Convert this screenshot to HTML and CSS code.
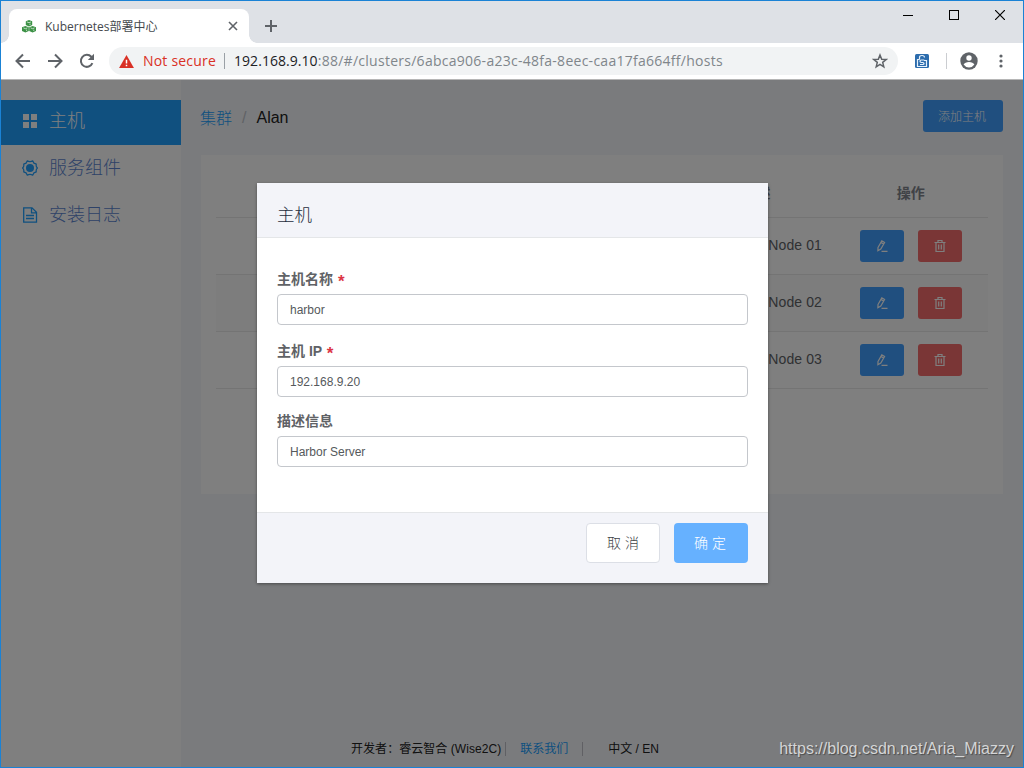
FILE: index.html
```html
<!DOCTYPE html>
<html lang="zh-CN">
<head>
    <meta charset="UTF-8">
    <meta name="viewport" content="width=device-width, initial-scale=1.0">
    <title>Kubernetes部署中心</title>
    <link rel="stylesheet" href="styles.css">
</head>
<body>
<div class="window">

    <!-- Tab strip -->
    <div class="tabstrip">
        <div class="tab">
            <svg class="favicon" viewBox="0 0 14 13">
                <g fill="#3c9146">
                    <path d="M7 0l3.200 1.300v3.800L7 6.500 3.800 5.100V1.300z"/>
                    <path d="M3.400 6l3.400 1.300v3.800L3.400 12.500 0 11.100V7.300z"/>
                    <path d="M10.600 6L14 7.300v3.800l-3.400 1.400-3.400-1.400V7.300z"/>
                </g>
                <path d="M4.800 1.900L7 2.700l2-.8M8 5V3.600M1.400 7.900l2 .8 2-.8M4.600 11V9.600M8.600 7.900l2 .8 2-.8M11.800 11V9.600" fill="none" stroke="#d9ecdb" stroke-width=".8"/>
            </svg>
            <span class="tab-title">Kubernetes部署中心</span>
            <svg class="tab-close" viewBox="0 0 10 10"><path d="M1 1l8 8M9 1L1 9" stroke="#5f6368" stroke-width="1.600"/></svg>
        </div>
        <svg class="new-tab" viewBox="0 0 12 12"><path d="M6 0v12M0 6h12" stroke="#5f6368" stroke-width="2"/></svg>
        <div class="window-controls">
            <svg viewBox="0 0 10 10" shape-rendering="crispEdges"><path d="M0 5.500h10" stroke="#000"/></svg>
            <svg viewBox="0 0 10 10" shape-rendering="crispEdges"><path d="M.5.5h9v9h-9z" fill="none" stroke="#000"/></svg>
            <svg viewBox="0 0 10 10"><path d="M0 0l10 10M10 0L0 10" stroke="#000" stroke-width="1.200"/></svg>
        </div>
    </div>

    <!-- Toolbar -->
    <div class="toolbar">
        <svg class="nav-icon" viewBox="0 0 16 16"><path d="M15 8H2M8 1.500L1.500 8 8 14.500" fill="none" stroke="#5f6368" stroke-width="2"/></svg>
        <svg class="nav-icon" viewBox="0 0 16 16"><path d="M1 8h13M8 1.500L14.500 8 8 14.500" fill="none" stroke="#5f6368" stroke-width="2"/></svg>
        <svg class="nav-icon" viewBox="0 0 16 16"><path d="M13.400 10.200A6 6 0 1 1 12.300 3.800L14 5.500" fill="none" stroke="#5f6368" stroke-width="2"/><path d="M15 .8v6.200H8.800z" fill="#5f6368"/></svg>
        <div class="address">
            <svg class="warning" viewBox="0 0 16 14"><path d="M8 0l8 14H0z" fill="#d93025"/><path d="M8 5v4.200M8 10.400v1.800" stroke="#fff" stroke-width="1.600"/></svg>
            <span class="not-secure">Not secure</span>
            <span class="separator"></span>
            <span class="url"><b>192.168.9.10</b>:88/#/clusters/6abca906-a23c-48fa-8eec-caa17fa664ff/hosts</span>
            <svg class="star" viewBox="0 0 16 16"><path d="M8 2l1.700 4.200 4.500.3-3.500 2.900 1.100 4.400L8 11.400l-3.800 2.400 1.100-4.400-3.500-2.900 4.500-.3z" fill="none" stroke="#5f6368" stroke-width="1.500"/></svg>
        </div>
        <svg class="extension" viewBox="0 0 14 14">
            <rect width="14" height="14" rx="1.500" fill="#2c6cad"/>
            <path d="M4.500 5.500V3.500q0-2 2.500-2t2.500 2M4.500 5.500h-2v7h9v-6H9M9.300 6H6.300q-1.300 0-1.300 1.200t1.300 1.300h1.500q1.200 0 1.200 1t-1.200 1H5" fill="none" stroke="#e7f2fc" stroke-width="1.200"/>
        </svg>
        <span class="toolbar-divider"></span>
        <svg class="account" viewBox="0 0 18 18"><circle cx="9" cy="9" r="8.700" fill="#5f6368"/><circle cx="9" cy="6" r="2.700" fill="#fff"/><path d="M3.600 12.600Q5 9.900 9 9.900t5.400 2.700Q12.500 15.500 9 15.500t-5.400-2.900z" fill="#fff"/></svg>
        <svg class="menu" viewBox="0 0 4 14"><g fill="#5f6368"><circle cx="2" cy="2" r="1.600"/><circle cx="2" cy="7" r="1.600"/><circle cx="2" cy="12" r="1.600"/></g></svg>
    </div>

    <div class="page">
        <!-- Sidebar -->
        <nav class="sidebar">
            <a class="side-item active">
                <svg viewBox="0 0 16 16"><path d="M1 1h6v6H1zM9 1h6v6H9zM1 9h6v6H1zM9 9h6v6H9z" fill="#fff"/></svg>
                <span>主机</span>
            </a>
            <a class="side-item">
                <svg viewBox="0 0 16 16"><circle cx="8" cy="8" r="4" fill="#20a0ff"/><path d="M5.300.8Q8 2.400 10.700.8l1.200 2.300 2.400 1q-.6 2.700 1.200 3.900-1.800 1.200-1.200 3.900l-2.400 1-1.200 2.300Q8 13.600 5.300 15.200l-1.200-2.300-2.400-1Q2.300 9.200.5 8q1.800-1.200 1.200-3.900l2.400-1z" fill="none" stroke="#20a0ff" stroke-width="1.200" stroke-linejoin="round"/></svg>
                <span>服务组件</span>
            </a>
            <a class="side-item">
                <svg viewBox="0 0 16 16"><path d="M1.700.8H10l4.500 4.500v9.900H1.700zM9.500.8v5h5M4 8.500h8M4 11.500h8" fill="none" stroke="#20a0ff" stroke-width="1.300"/></svg>
                <span>安装日志</span>
            </a>
        </nav>

        <!-- Host list -->
        <main class="main">
            <div class="page-head">
                <div class="breadcrumb"><a>集群</a><i>/</i><span>Alan</span></div>
                <button class="btn-add">添加主机</button>
            </div>
            <div class="card">
                <div class="table-row table-head">
                    <div></div><div></div><div></div>
                    <div>描述</div>
                    <div>操作</div>
                </div>
                <div class="table-row">
                    <div></div><div></div><div></div>
                    <div class="desc">Kubernetes Node 01</div>
                    <div class="actions">
                        <button class="btn-edit"><svg viewBox="0 0 12 12"><path d="M2 7.500L5.800.9l2.800 1.600-3.800 6.600-2.900 1.700zM5 2.500l2.700 1.600M5.500 11.400H11.500" fill="none" stroke="#fff" stroke-width="1.200"/></svg></button>
                        <button class="btn-delete"><svg viewBox="0 0 12 12"><path d="M.5 2.500h11M4 2.500v-2h4v2M2 2.500v9h8v-9M4.700 4.500v5M7.300 4.500v5" fill="none" stroke="#fff" stroke-width="1.200"/></svg></button>
                    </div>
                </div>
                <div class="table-row striped">
                    <div></div><div></div><div></div>
                    <div class="desc">Kubernetes Node 02</div>
                    <div class="actions">
                        <button class="btn-edit"><svg viewBox="0 0 12 12"><path d="M2 7.500L5.800.9l2.800 1.600-3.800 6.600-2.900 1.700zM5 2.500l2.700 1.600M5.500 11.400H11.500" fill="none" stroke="#fff" stroke-width="1.200"/></svg></button>
                        <button class="btn-delete"><svg viewBox="0 0 12 12"><path d="M.5 2.500h11M4 2.500v-2h4v2M2 2.500v9h8v-9M4.700 4.500v5M7.300 4.500v5" fill="none" stroke="#fff" stroke-width="1.200"/></svg></button>
                    </div>
                </div>
                <div class="table-row">
                    <div></div><div></div><div></div>
                    <div class="desc">Kubernetes Node 03</div>
                    <div class="actions">
                        <button class="btn-edit"><svg viewBox="0 0 12 12"><path d="M2 7.500L5.800.9l2.800 1.600-3.800 6.600-2.900 1.700zM5 2.500l2.700 1.600M5.500 11.400H11.500" fill="none" stroke="#fff" stroke-width="1.200"/></svg></button>
                        <button class="btn-delete"><svg viewBox="0 0 12 12"><path d="M.5 2.500h11M4 2.500v-2h4v2M2 2.500v9h8v-9M4.700 4.500v5M7.300 4.500v5" fill="none" stroke="#fff" stroke-width="1.200"/></svg></button>
                    </div>
                </div>
            </div>
            <footer class="footer">
                <span class="developer">开发者：睿云智合 (Wise2C)</span>
                <a>联系我们</a>
                <span class="lang">中文 / EN</span>
            </footer>
        </main>

        <!-- Host dialog -->
        <div class="overlay">
            <div class="modal">
                <div class="modal-header">主机</div>
                <div class="modal-body">
                    <div class="field">
                        <label>主机名称 <em>*</em></label>
                        <input type="text" value="harbor">
                    </div>
                    <div class="field">
                        <label>主机 IP <em>*</em></label>
                        <input type="text" value="192.168.9.20">
                    </div>
                    <div class="field last">
                        <label>描述信息</label>
                        <input type="text" value="Harbor Server">
                    </div>
                </div>
                <div class="modal-footer">
                    <button class="btn-cancel">取 消</button>
                    <button class="btn-ok">确 定</button>
                </div>
            </div>
        </div>
        <div class="watermark">https://blog.csdn.net/Aria_Miazzy</div>
    </div>
</div>
</body>
</html>
```
FILE: styles.css
```css
* {
    box-sizing: border-box;
    margin: 0;
    padding: 0;
}

body {
    font-family: "Liberation Sans", "Noto Sans CJK SC", sans-serif;
    font-size: 14px;
    color: #48576a;
}

svg {
    display: block;
    flex: none;
}

button {
    border: none;
    font-family: inherit;
    cursor: pointer;
}

.window {
    display: flex;
    flex-direction: column;
    width: 1024px;
    height: 768px;
    border: 1px solid #1a82d5;
    background: #dee1e6;
    overflow: hidden;
}

/* Tab strip */
.tabstrip {
    display: flex;
    height: 42px;
    flex: none;
    padding: 8px 18px 0 0;
    font-family: "Open Sans", "Noto Sans CJK SC", sans-serif;
}

.tab {
    display: flex;
    align-items: center;
    width: 240px;
    height: 34px;
    padding: 0 11px 0 13px;
    background: #fff;
    border-radius: 8px 8px 0 0;
}

/* curved feet on both sides of the tab */
.tabstrip::before,
.tab + .new-tab {
    flex: none;
}

.tabstrip::before,
.tab::after {
    content: "";
    width: 8px;
    height: 8px;
    align-self: flex-end;
}

.tabstrip::before {
    background: radial-gradient(circle at 0 0, transparent 7.5px, #fff 8px);
}

.tab::after {
    margin-right: -19px;
    margin-left: 11px;
    background: radial-gradient(circle at 100% 0, transparent 7.5px, #fff 8px);
}

.favicon {
    width: 14px;
    height: 13px;
}

.tab-title {
    flex: 1;
    margin-left: 9px;
    font-size: 12px;
    color: #45494d;
    white-space: nowrap;
}

.tab-close {
    width: 10px;
    height: 10px;
}

.new-tab {
    width: 12px;
    height: 12px;
    margin: 11px 0 0 16px;
}

.window-controls {
    display: flex;
    gap: 36px;
    margin-left: auto;
    padding-top: 1px;
}

.window-controls svg {
    width: 10px;
    height: 10px;
}

/* Toolbar */
.toolbar {
    display: flex;
    align-items: center;
    height: 36px;
    flex: none;
    padding: 0 20px 0 14px;
    background: #fff;
    font-family: "Open Sans", "Noto Sans CJK SC", sans-serif;
}

.nav-icon {
    width: 16px;
    height: 16px;
    margin-right: 16px;
}

.address {
    display: flex;
    align-items: center;
    width: 789px;
    height: 28px;
    margin-left: -2px;
    padding: 0 10px;
    border-radius: 14px;
    background: #f1f3f4;
    font-size: 14px;
    white-space: nowrap;
}

.warning {
    width: 15px;
    height: 13px;
}

.not-secure {
    width: 73px;
    margin-left: 9px;
    padding-bottom: 2px;
    letter-spacing: 0.2px;
    color: #d93025;
}

.separator {
    width: 1px;
    height: 16px;
    margin: 0 9px 0 8px;
    background: #9aa0a6;
}

.url {
    flex: 1;
    padding-bottom: 2px;
    letter-spacing: 0.27px;
    color: #80868b;
}

.url b {
    font-weight: normal;
    letter-spacing: 0.05px;
    color: #202124;
}

.star {
    width: 16px;
    height: 16px;
}

.extension {
    width: 14px;
    height: 14px;
    margin-left: 17px;
}

.toolbar-divider {
    width: 1px;
    height: 16px;
    margin: 0 13px 0 17px;
    background: #cbcdd1;
}

.account {
    width: 18px;
    height: 18px;
}

.menu {
    width: 4px;
    height: 14px;
    margin-left: auto;
}

/* Page */
.page {
    position: relative;
    display: flex;
    flex: 1;
    border-top: 1px solid #b6b6b6;
    background: #f5f7fa;
}

.sidebar {
    width: 180px;
    padding-top: 20px;
    background: #fff;
}

.side-item {
    display: flex;
    align-items: center;
    height: 45px;
    margin-bottom: 2px;
    padding: 0 0 3px 21px;
    font-size: 18px;
    font-weight: 300;
    line-height: 26px;
    color: #5c85d0;
}

.side-item svg {
    width: 16px;
    height: 16px;
    margin-right: 11px;
}

.side-item span {
    padding-bottom: 1px;
}

.side-item.active {
    background: #20a0ff;
    color: #fff;
}

.main {
    display: flex;
    flex-direction: column;
    flex: 1;
    padding: 20px 20px 0 19px;
}

.page-head {
    display: flex;
    justify-content: space-between;
    height: 32px;
}

.breadcrumb {
    display: flex;
    align-items: center;
    padding-top: 4px;
    font-size: 16px;
    font-weight: 300;
    color: #1f2d3d;
}

.breadcrumb a {
    padding-bottom: 2px;
    color: #20a0ff;
}

.breadcrumb i {
    margin: 0 9px 0 10px;
    font-style: normal;
    color: #c0c4cc;
}

.breadcrumb span {
    margin-left: 1px;
    font-weight: 400;
    color: #222;
}

.btn-add {
    width: 80px;
    height: 32px;
    padding: 0 2px 2px 0;
    border-radius: 3px;
    background: #409eff;
    color: #fff;
    font-size: 12px;
    font-weight: 300;
}

/* Table */
.card {
    height: 339px;
    flex: none;
    margin: 23px 0 0 1px;
    padding: 15px;
    background: #fff;
}

.table-row {
    display: grid;
    grid-template-columns: repeat(5, 1fr);
    align-items: center;
    height: 57px;
    border-bottom: 1px solid #e8e8e8;
    text-align: center;
    color: #606266;
    line-height: 20px;
}

.table-head {
    height: 48px;
    padding-bottom: 2px;
    font-size: 14px;
    font-weight: bold;
    color: #80848c;
}

.striped {
    background: #fafafa;
}

.desc {
    padding: 0 0 2px 1px;
    letter-spacing: 0.1px;
    white-space: nowrap;
}

.actions {
    display: flex;
    justify-content: center;
    gap: 14px;
}

.actions button {
    display: flex;
    align-items: center;
    justify-content: center;
    width: 44px;
    height: 32px;
    border-radius: 3px;
}

.actions svg {
    width: 12px;
    height: 12px;
}

.btn-edit {
    background: #409eff;
}

.btn-delete {
    background: #f56c6c;
}

.footer {
    display: flex;
    align-items: center;
    height: 36px;
    margin-top: auto;
    padding: 0 0 1px 151px;
    font-size: 12px;
    line-height: 14px;
    color: #222;
}

.footer a {
    margin-right: 14px;
    padding-left: 14px;
    color: #20a0ff;
}

.developer,
.lang {
    white-space: nowrap;
}

.developer {
    padding-right: 4px;
    border-right: 1px solid #c0c0c8;
    letter-spacing: 0.05px;
}

.lang {
    padding-left: 25px;
    border-left: 1px solid #c0c0c8;
}

/* Dialog */
.overlay {
    position: absolute;
    inset: 0;
    padding: 103px 0 0 256px;
    background: rgba(0, 0, 0, 0.5);
}

.modal {
    display: flex;
    flex-direction: column;
    width: 511px;
    height: 400px;
    background: #fff;
    box-shadow: 0 1px 3px rgba(0, 0, 0, 0.4);
}

.modal-header {
    height: 55px;
    padding: 9px 20px 0;
    border-bottom: 1px solid #e4e6e8;
    background: #f3f4f9;
    font-size: 17.5px;
    font-weight: 300;
    line-height: 47px;
    color: #1f2d3d;
}

.modal-body {
    flex: 1;
    padding: 29px 20px 0;
}

.field {
    margin-bottom: 14px;
}

.field.last {
    margin-top: -2px;
}

.field label {
    display: block;
    height: 24px;
    margin-bottom: 3px;
    font-size: 14px;
    font-weight: bold;
    line-height: 24px;
    color: #606266;
}

.field em {
    margin-left: 1px;
    font-size: 17px;
    line-height: 10px;
    vertical-align: -3px;
    font-style: normal;
    color: #dc3545;
}

.field input {
    display: block;
    width: 100%;
    height: 31px;
    padding: 0 12px;
    border: 1px solid #c4c7cc;
    border-radius: 4px;
    outline: none;
    font-family: inherit;
    font-size: 12px;
    color: #55595c;
}

.modal-footer {
    display: flex;
    justify-content: flex-end;
    gap: 14px;
    height: 71px;
    padding: 10px 20px;
    border-top: 1px solid #e4e6e8;
    background: #f3f4f9;
}

.modal-footer button {
    width: 74px;
    height: 40px;
    padding-bottom: 2px;
    border-radius: 4px;
    font-size: 14px;
    font-weight: 300;
}

.btn-cancel {
    border: 1px solid #dcdfe6;
    background: #fff;
    color: #404347;
}

.modal-footer .btn-ok {
    padding-right: 2px;
    background: #66b1ff;
    color: #fff;
}

.watermark {
    position: absolute;
    right: 9px;
    bottom: 9px;
    font-size: 16px;
    color: #d4d5d6;
    text-shadow: 1px 1px 1px rgba(0, 0, 0, 0.4);
}
```
